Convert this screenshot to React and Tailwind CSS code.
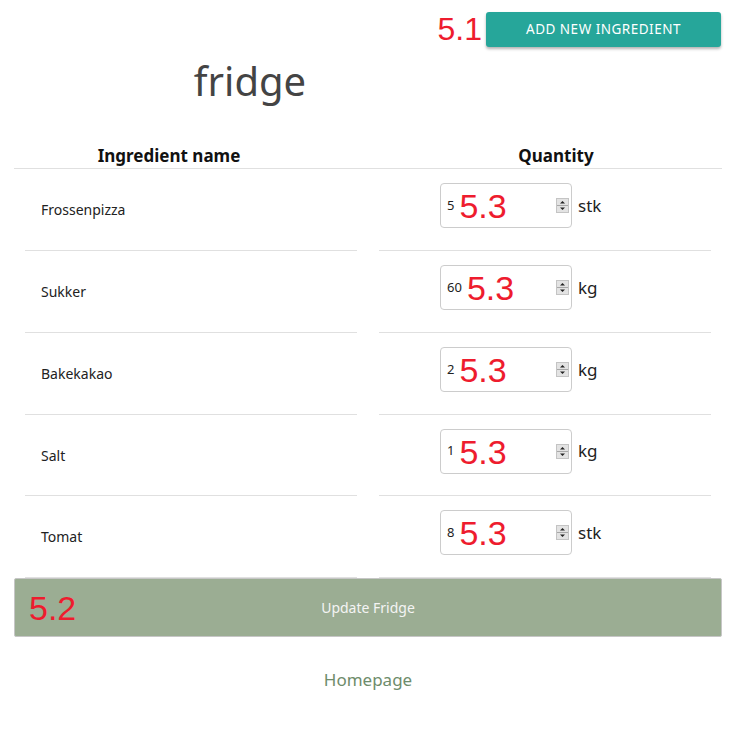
import React from "react";

const rows = [
  { name: "Frossenpizza", qty: "5", unit: "stk", h: "h-[82px]" },
  { name: "Sukker", qty: "60", unit: "kg", h: "h-[82px]" },
  { name: "Bakekakao", qty: "2", unit: "kg", h: "h-[82px]" },
  { name: "Salt", qty: "1", unit: "kg", h: "h-[81px]" },
  { name: "Tomat", qty: "8", unit: "stk", h: "h-[82px]" },
];

function Spinner() {
  return (
    <svg width="13" height="15" viewBox="0 0 13 15" className="block">
      <rect x="0" y="0" width="13" height="15" fill="#e3e3e3" />
      <rect x="0.5" y="0.5" width="12" height="14" fill="none" stroke="#c4c4c4" />
      <line x1="1" y1="7.5" x2="12" y2="7.5" stroke="#a8a8a8" />
      <path d="M4 5.5 L6.5 3 L9 5.5 Z" fill="#222" />
      <path d="M4 9.5 L6.5 12 L9 9.5 Z" fill="#222" />
    </svg>
  );
}

export default function App() {
  return (
    <div className="w-[732px] h-[733px] overflow-hidden bg-white font-['Noto_Sans',sans-serif] text-[#222]">
      <div className="flex justify-end items-center pt-[12px] pr-[11px] gap-[4px]">
        <span className="font-['Liberation_Sans',sans-serif] text-[32px] leading-[35px] text-[#ee1c2e]">5.1</span>
        <div className="w-[235px] h-[35px] rounded-[3px] bg-[#26a69a] shadow-[0_2px_3px_rgba(0,0,0,0.3)] flex items-center justify-center text-white text-[13.5px] tracking-[0.5px] uppercase">
          Add new ingredient
        </div>
      </div>
      <div className="w-[500px] mt-[5px] h-[57px] text-center text-[40px] leading-[57px] text-[#444]">fridge</div>
      <div className="ml-[14px] w-[708px] mt-[34px]">
        <div className="flex h-[26px] border-b border-[#e0e0e0] font-bold text-[17px] leading-[25px] text-[#111]">
          <div className="w-[310px] shrink-0 text-center">Ingredient name</div>
          <div className="w-[464px] shrink-0 text-center">Quantity</div>
        </div>
        {rows.map((r) => (
          <div key={r.name} className={"flex " + r.h}>
            <div className="mx-[11px] w-[332px] shrink-0 border-b border-[#e0e0e0] flex items-center pl-[16px] text-[14px]">
              {r.name}
            </div>
            <div className="mx-[11px] w-[332px] shrink-0 border-b border-[#e0e0e0] flex items-center pl-[61px]">
              <div className="flex items-center gap-[6px] mb-[8px]">
                <div className="w-[132px] h-[45px] border border-[#cccccc] rounded-[4px] flex items-center pl-[6px] pr-[2px]">
                  <span className="text-[13px]">{r.qty}</span>
                  <span className="ml-[5px] mt-[1px] font-['Liberation_Sans',sans-serif] text-[34px] leading-[38px] text-[#ee1c2e]">5.3</span>
                  <div className="ml-auto">
                    <Spinner />
                  </div>
                </div>
                <span className="text-[17px]">{r.unit}</span>
              </div>
            </div>
          </div>
        ))}
        <div className="relative h-[59px] w-[708px] bg-[#9bad93] border border-[#c6c6c6] rounded-[2px] flex items-center justify-center text-[14px] text-[#f4f4f4]">
          Update Fridge
          <span className="absolute left-[14px] top-[10px] font-['Liberation_Sans',sans-serif] text-[34px] leading-[38px] text-[#ee1c2e]">5.2</span>
        </div>
        <div className="mt-[30px] text-center text-[17px] text-[#6e8c6b]">Homepage</div>
      </div>
    </div>
  );
}
